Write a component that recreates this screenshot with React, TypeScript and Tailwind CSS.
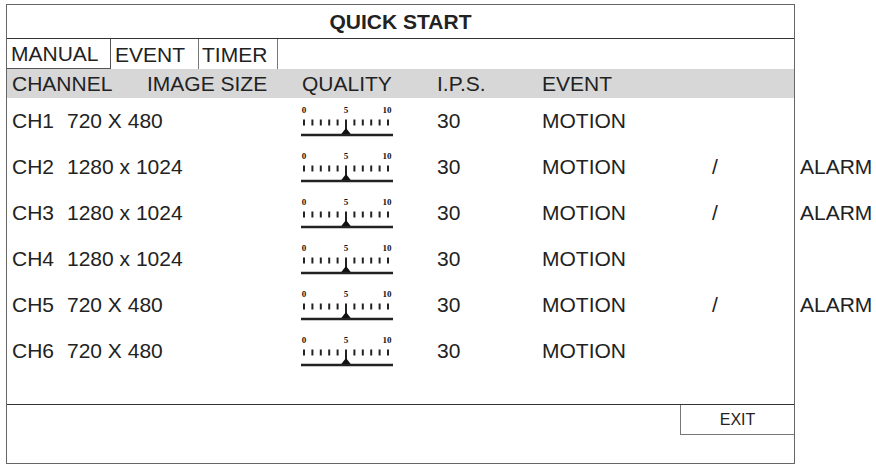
import React from "react";

type Row = {
  ch: string;
  size: string;
  ips: string;
  alarm: boolean;
};

const ROWS: Row[] = [
  { ch: "CH1", size: "720 X 480", ips: "30", alarm: false },
  { ch: "CH2", size: "1280 x 1024", ips: "30", alarm: true },
  { ch: "CH3", size: "1280 x 1024", ips: "30", alarm: true },
  { ch: "CH4", size: "1280 x 1024", ips: "30", alarm: false },
  { ch: "CH5", size: "720 X 480", ips: "30", alarm: true },
  { ch: "CH6", size: "720 X 480", ips: "30", alarm: false },
];

function QualityScale() {
  const ticks = Array.from({ length: 11 }, (_, i) => 5 + i * 8.4);
  return (
    <svg width="96" height="46" viewBox="0 0 96 46" className="block">
      <g
        fontFamily="'Liberation Serif', serif"
        fontSize="9"
        fontWeight="bold"
        fill="#111"
        textAnchor="middle"
      >
        <text x="5" y="15">0</text>
        <text x="47" y="15">5</text>
        <text x="88" y="15">10</text>
      </g>
      {ticks.map((x, i) => (
        <line
          key={i}
          x1={x}
          x2={x}
          y1={21.5}
          y2={i === 5 ? 33 : 27.5}
          stroke="#222"
          strokeWidth="2"
        />
      ))}
      <polygon points="41.5,37 52.5,37 47,30" fill="#111" />
      <line x1="2" x2="94" y1="37" y2="37" stroke="#222" strokeWidth="2.4" />
    </svg>
  );
}

export default function App() {
  return (
    <div
      className="w-[876px] h-[465px] bg-white text-[#222] overflow-hidden pt-[4px] pl-[6px]"
      style={{ fontFamily: "'Liberation Sans', Arial, sans-serif" }}
    >
      <div className="w-[789px] h-[460px] border border-[#666] flex flex-col">
        {/* title */}
        <div className="h-[34px] shrink-0 border-b border-[#333] flex items-center justify-center text-[21px] font-bold">
          QUICK START
        </div>

        {/* tabs */}
        <div className="h-[30px] shrink-0 flex text-[21px] leading-none">
          <div className="w-[104px] border-r border-b border-[#555] flex items-center pl-[4px]">
            MANUAL
          </div>
          <div className="w-[88px] border-r border-[#777] flex items-center pl-[4px]">
            EVENT
          </div>
          <div className="w-[79px] border-r border-[#777] flex items-center pl-[3px]">
            TIMER
          </div>
        </div>

        {/* column header */}
        <div className="h-[29px] shrink-0 bg-[#d7d7d7] flex items-center pl-[5px] text-[21px]">
          <span className="w-[135px] shrink-0">CHANNEL</span>
          <span className="w-[155px] shrink-0">IMAGE SIZE</span>
          <span className="w-[135px] shrink-0">QUALITY</span>
          <span className="w-[105px] shrink-0">I.P.S.</span>
          <span className="shrink-0">EVENT</span>
        </div>

        {/* channel rows */}
        {ROWS.map((r) => (
          <div
            key={r.ch}
            className="h-[46px] shrink-0 flex items-center pl-[5px] text-[21px] whitespace-nowrap"
          >
            <span className="w-[55px] shrink-0">{r.ch}</span>
            <span className="w-[230px] shrink-0">{r.size}</span>
            <div className="w-[140px] shrink-0 pl-[2px]">
              <QualityScale />
            </div>
            <span className="w-[105px] shrink-0">{r.ips}</span>
            <span className="w-[170px] shrink-0">MOTION</span>
            <span className="w-[88px] shrink-0">{r.alarm ? "/" : ""}</span>
            <span className="shrink-0">{r.alarm ? "ALARM" : ""}</span>
          </div>
        ))}

        <div className="flex-1" />

        {/* footer */}
        <div className="h-[59px] shrink-0 border-t border-[#333] flex justify-end">
          <div className="w-[114px] h-[30px] border-l border-b border-[#777] flex items-center justify-center text-[16px]">
            EXIT
          </div>
        </div>
      </div>
    </div>
  );
}
